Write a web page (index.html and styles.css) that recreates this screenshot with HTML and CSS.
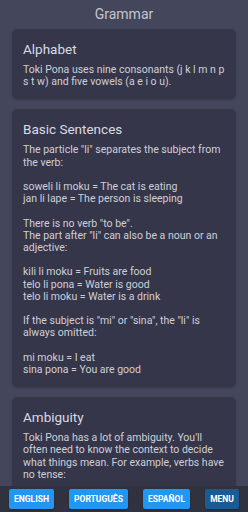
FILE: index.html
```html
<!DOCTYPE html>
<html lang="en">
<head>
<meta charset="UTF-8" />
<meta name="viewport" content="width=device-width, initial-scale=1" />
<title>Grammar</title>
<link rel="stylesheet" href="styles.css">
</head>
<body>
  <main class="page">
    <h1 class="title">Grammar</h1>

    <section class="card">
      <h2>Alphabet</h2>
      <p>Toki Pona uses nine consonants (j k l m n p s t w) and five vowels (a e i o u).</p>
    </section>

    <section class="card">
      <h2>Basic Sentences</h2>
      <p>The particle "li" separates the subject from the verb:</p>
      <p>soweli li moku = The cat is eating<br>jan li lape = The person is sleeping</p>
      <p>There is no verb "to be".<br>The part after "li" can also be a noun or an adjective:</p>
      <p>kili li moku = Fruits are food<br>telo li pona = Water is good<br>telo li moku = Water is a drink</p>
      <p>If the subject is "mi" or "sina", the "li" is always omitted:</p>
      <p>mi moku = I eat<br>sina pona = You are good</p>
    </section>

    <section class="card">
      <h2>Ambiguity</h2>
      <p>Toki Pona has a lot of ambiguity. You'll often need to know the context to decide what things mean. For example, verbs have no tense:</p>
      <p>mi moku = I eat / I ate / I will eat</p>
    </section>
  </main>

  <nav class="langbar">
    <button class="btn">English</button>
    <button class="btn">Português</button>
    <button class="btn">Español</button>
    <button class="btn btn-menu">Menu</button>
  </nav>
</body>
</html>
```

FILE: styles.css
```css
body {
  margin: 0;
  background: #44465c;
  font-family: Roboto, "Liberation Sans", sans-serif;
  color: #cfd0d8;
}
.page {
  padding: 0 12px 40px;
}
.title {
  margin: 0;
  height: 29px;
  line-height: 28px;
  text-align: center;
  font-size: 14px;
  font-weight: 400;
  color: #c4c5ce;
}
.card {
  background: #35364a;
  border-radius: 5px;
  padding: 11px 11px 11px;
  margin-bottom: 10px;
  box-shadow: 0 1px 2px rgba(0,0,0,0.2);
}
.card h2 {
  margin: 0 0 6px;
  font-size: 13.5px;
  font-weight: 400;
  line-height: 18px;
  color: #dadbe2;
}
.card p {
  margin: 0 0 12.2px;
  font-size: 10.5px;
  line-height: 12.2px;
}
.card p:last-child {
  margin-bottom: 0;
}
.langbar {
  position: fixed;
  left: 0;
  right: 0;
  bottom: 0;
  height: 26px;
  background: #30323f;
  display: flex;
  align-items: center;
  justify-content: space-between;
  padding: 0 9px;
}
.btn {
  height: 20px;
  padding: 0 5px;
  border: none;
  border-radius: 2px;
  background: #2196f3;
  color: #fff;
  font-family: Roboto, "Liberation Sans", sans-serif;
  font-size: 8.5px;
  font-weight: 700;
  text-transform: uppercase;
  box-shadow: 0 1px 2px rgba(0,0,0,0.3);
}
.btn-menu {
  background: #1b5b92;
}
```
